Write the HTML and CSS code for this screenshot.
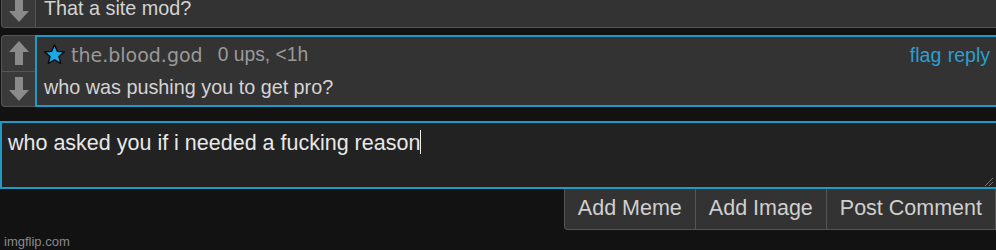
FILE: index.html
```html
<!DOCTYPE html>
<html>
<head>
<meta charset="utf-8">
<link rel="stylesheet" href="styles.css">
</head>
<body>
<div class="thread">
  <div class="comment comment-cut">
    <div class="votes">
      <div class="vote"><svg width="20" height="24" viewBox="0 0 20 24"><polygon points="10,0 20,11 14,11 14,24 6,24 6,11 0,11" fill="#8a8a8a"/></svg></div>
      <div class="vote"><svg width="20" height="24" viewBox="0 0 20 24"><polygon points="10,24 20,13 14,13 14,0 6,0 6,13 0,13" fill="#8a8a8a"/></svg></div>
    </div>
    <div class="body">
      <div class="head"></div>
      <div class="text">That a site mod?</div>
    </div>
  </div>
  <div class="comment">
    <div class="votes">
      <div class="vote"><svg width="20" height="24" viewBox="0 0 20 24"><polygon points="10,0 20,11 14,11 14,24 6,24 6,11 0,11" fill="#8a8a8a"/></svg></div>
      <div class="vote"><svg width="20" height="24" viewBox="0 0 20 24"><polygon points="10,24 20,13 14,13 14,0 6,0 6,13 0,13" fill="#8a8a8a"/></svg></div>
    </div>
    <div class="body active">
      <div class="head">
        <svg class="star" width="21" height="21" viewBox="0 0 20 20"><polygon points="10,0.8 12.7,7 19.4,7.5 14.3,11.9 15.9,18.6 10,15.1 4.1,18.6 5.7,11.9 0.6,7.5 7.3,7" fill="#19a9e8" stroke="#0a0a0a" stroke-width="1.3" stroke-linejoin="round"/></svg>
        <span class="user">the.blood.god</span>
        <span class="meta">0 ups, &lt;1h</span>
        <span class="links"><span>flag</span> <span>reply</span></span>
      </div>
      <div class="text">who was pushing you to get pro?</div>
    </div>
  </div>
</div>
<div class="reply">
  <div class="box">who asked you if i needed a fucking reason<span class="caret"></span><span class="grip"></span></div>
  <div class="buttons">
    <div class="btn btn-first">Add Meme</div>
    <div class="btn">Add Image</div>
    <div class="btn">Post Comment</div>
  </div>
</div>
<div class="mark">imgflip.com</div>
</body>
</html>
```

FILE: styles.css
```css
html, body {
  margin: 0;
  padding: 0;
  background: #121212;
  width: 996px;
  height: 250px;
  overflow: hidden;
  font-family: "Liberation Sans", Arial, sans-serif;
}
.thread {
  display: flex;
  flex-direction: column;
  gap: 7px;
}
.comment {
  display: flex;
  height: 72px;
  margin-left: 1px;
}
.comment-cut {
  margin-top: -44px;
}
.votes {
  width: 34px;
  display: flex;
  flex-direction: column;
  background: #3a3a3a;
  border: 1px solid #555;
  border-right: none;
  border-radius: 4px 0 0 4px;
  box-sizing: border-box;
}
.vote {
  flex: 1;
  display: flex;
  align-items: center;
  justify-content: center;
}
.vote + .vote {
  border-top: 1px solid #555;
}
.body {
  flex: 1;
  background: #333;
  border: 1px solid #555;
  border-right: none;
  box-sizing: border-box;
  padding: 4px 0 0 8px;
}
.body.active {
  border: 2px solid #1d9bc6;
  border-right: none;
  padding: 3px 0 0 7px;
}
.head {
  display: flex;
  align-items: center;
  height: 30px;
}
.star {
  margin-right: 6px;
  margin-top: -1px;
}
.user {
  font-family: "DejaVu Sans", sans-serif;
  font-size: 19px;
  color: #9a9a9a;
  margin-right: 15px;
}
.meta {
  font-size: 19.3px;
  color: #9a9a9a;
}
.links {
  margin-left: auto;
  margin-right: 6px;
  font-size: 19.5px;
  color: #2a9fd0;
  word-spacing: 1px;
}
.text {
  font-size: 19.8px;
  color: #d4d4d4;
  margin-top: 5px;
  line-height: 24px;
}
.reply {
  margin-top: 14px;
  display: flex;
  flex-direction: column;
  align-items: flex-end;
}
.box {
  position: relative;
  align-self: stretch;
  height: 68px;
  background: #222;
  border: 2px solid #1d9bc6;
  box-sizing: border-box;
  margin-right: -2px;
  padding: 6px 0 0 6px;
  font-size: 21.5px;
  color: #e8e8e8;
  line-height: 28px;
}
.caret {
  display: inline-block;
  width: 1px;
  height: 24px;
  background: #eee;
  vertical-align: -4px;
}
.grip {
  position: absolute;
  right: 3px;
  bottom: 1px;
  width: 8px;
  height: 8px;
  background: linear-gradient(135deg, transparent 45%, #777 45%, #777 55%, transparent 55%, transparent 70%, #777 70%, #777 80%, transparent 80%);
}
.buttons {
  display: flex;
  height: 42px;
  margin-top: -1px;
}
.btn {
  display: flex;
  align-items: center;
  padding: 0 13px;
  background: #333;
  border: 1px solid #555;
  border-top: none;
  border-left: none;
  color: #cfcfcf;
  font-size: 21.5px;
}
.btn-first {
  border-left: 1px solid #555;
  border-radius: 0 0 0 4px;
}
.mark {
  position: absolute;
  left: 4px;
  top: 234px;
  font-size: 13px;
  color: #8a8a8a;
}
```
